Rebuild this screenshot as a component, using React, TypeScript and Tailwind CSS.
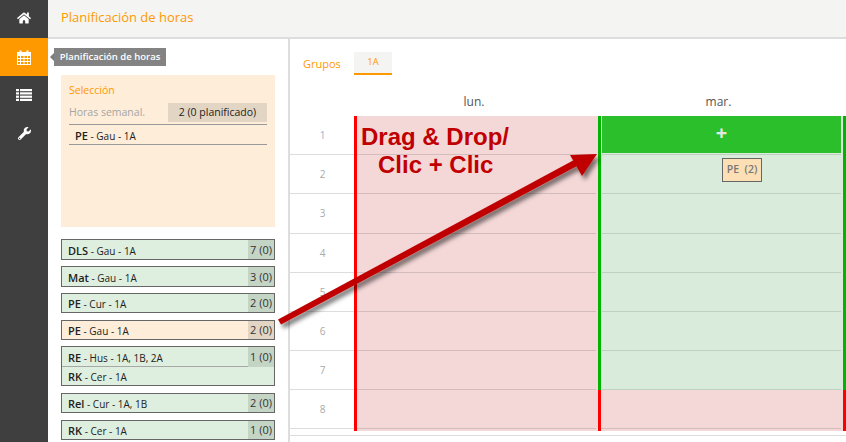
import React from "react";
import { FaHome, FaWrench } from "react-icons/fa";

function CalendarIcon() {
  return (
    <svg width="14" height="15" viewBox="0 0 14 15" fill="none" stroke="white" strokeWidth="1">
      <rect x="0.5" y="2.5" width="13" height="12" />
      <rect x="0.5" y="2.5" width="13" height="3" fill="white" />
      <path d="M0.5 8.5H13.5M0.5 11.5H13.5M3.5 5.5V14.5M7 5.5V14.5M10.5 5.5V14.5" />
      <path d="M3.5 0.5V3.5M10.5 0.5V3.5" strokeWidth="2" />
    </svg>
  );
}

function ListIcon() {
  return (
    <svg width="16" height="12" viewBox="0 0 16 12" fill="white">
      <rect x="0" y="0" width="16" height="2.2" />
      <rect x="0" y="3.3" width="16" height="2.2" />
      <rect x="0" y="6.6" width="16" height="2.2" />
      <rect x="0" y="9.8" width="16" height="2.2" />
      <rect x="3" y="0" width="1" height="12" fill="#3f3f3f" />
    </svg>
  );
}

function Sidebar() {
  return (
    <div className="w-[48px] shrink-0 bg-[#3f3f3f] flex flex-col">
      <div className="h-[38px] flex items-center justify-center pb-[3px]"><FaHome className="text-white text-[14px]" /></div>
      <div className="h-[38px] flex items-center justify-center bg-[#ff9900]"><CalendarIcon /></div>
      <div className="h-[38px] flex items-center justify-center"><ListIcon /></div>
      <div className="h-[38px] flex items-center justify-center"><FaWrench className="text-white text-[13px]" /></div>
    </div>
  );
}

type Item = { a: string; b: string; n: string; h: string; mt: string; sel?: boolean; extra?: [string, string] };
const items: Item[] = [
  { a: "DLS", b: "Gau - 1A", n: "7 (0)", h: "h-[19px]", mt: "mt-0" },
  { a: "Mat", b: "Gau - 1A", n: "3 (0)", h: "h-[19px]", mt: "mt-[6px]" },
  { a: "PE", b: "Cur - 1A", n: "2 (0)", h: "h-[18px]", mt: "mt-[6px]" },
  { a: "PE", b: "Gau - 1A", n: "2 (0)", h: "h-[18px]", mt: "mt-[7px]", sel: true },
  { a: "RE", b: "Hus - 1A, 1B, 2A", n: "1 (0)", h: "h-[20px]", mt: "mt-[6px]", extra: ["RK", "Cer - 1A"] },
  { a: "Rel", b: "Cur - 1A, 1B", n: "2 (0)", h: "h-[18px]", mt: "mt-[7px]" },
  { a: "RK", b: "Cer - 1A", n: "1 (0)", h: "h-[18px]", mt: "mt-[7px]" },
];

function Name({ a, b }: { a: string; b: string }) {
  return (
    <span className="text-[#222] whitespace-nowrap leading-[14px]">
      <span className="text-[11px] font-semibold">{a}</span>
      <span className="text-[10px]"> - {b}</span>
    </span>
  );
}

function ListItem({ it }: { it: Item }) {
  return (
    <div className={`${it.mt} border border-[#666] ${it.sel ? "bg-[#feedd9]" : "bg-[#deeedf]"}`}>
      <div className={`flex ${it.h}`}>
        <div className={`flex-1 flex items-center pl-[6px] ${it.extra ? "border-b border-[#a8a8a8]" : ""}`}>
          <Name a={it.a} b={it.b} />
        </div>
        <div className={`w-[26px] flex items-center justify-center text-[11px] leading-[14px] text-[#333] ${it.sel ? "bg-[#e3d5c3]" : "bg-[#c5d5c5]"}`}>{it.n}</div>
      </div>
      {it.extra && (
        <div className="h-[18px] flex items-center pl-[6px]">
          <Name a={it.extra[0]} b={it.extra[1]} />
        </div>
      )}
    </div>
  );
}

function LeftPanel() {
  return (
    <div className="w-[242px] shrink-0 border-r-2 border-[#dddddd] pl-[13px] pr-[13px]">
      <div className="h-[36px] pt-[13px] text-[11px] leading-[16px] text-[#bbb]">Clases</div>
      <div className="h-[152px] bg-[#feedd9] px-[8px] pt-[8px]">
        <div className="text-[10.5px] leading-[15px] text-[#ff9900]">Selección</div>
        <div className="flex items-center justify-between mt-[5px] h-[19px]">
          <span className="text-[10.5px] text-[#a5a5a5]">Horas semanal.</span>
          <span className="w-[99px] h-[19px] flex items-center justify-center bg-[#e3d5c3] text-[10.5px] text-[#222]">2 (0 planificado)</span>
        </div>
        <div className="mt-[2px] h-[21px] border-y border-[#999] flex items-center pl-[6px]">
          <Name a="PE" b="Gau - 1A" />
        </div>
      </div>
      <div className="mt-[12px]">
        {items.map((it, i) => <ListItem key={i} it={it} />)}
      </div>
    </div>
  );
}

const hours = [
  { n: "1", h: "h-[39px]" },
  { n: "2", h: "h-[39px]" },
  { n: "3", h: "h-[40px]" },
  { n: "4", h: "h-[39px]" },
  { n: "5", h: "h-[39px]" },
  { n: "6", h: "h-[39px]" },
  { n: "7", h: "h-[39px]" },
  { n: "8", h: "h-[39px]" },
];

function Red() {
  return (
    <div className="h-full border-l-[3px] border-[#ff0000] bg-[#f4d7d7] flex flex-col">
      <div className="flex-1" />
      <div className="h-px mr-[2px] bg-[#d5bcbc]" />
    </div>
  );
}

function Green({ top, chip }: { top?: boolean; chip?: boolean }) {
  return (
    <div className="h-full border-l-[3px] border-[#00b400] bg-[#d9ebda] flex flex-col">
      {top ? (
        <div className="flex-1 ml-px mr-[2px] mb-px bg-[#2bbf2b] flex items-center justify-center font-bold text-[20px] leading-none pb-[3px] text-[#e4e8e4]">+</div>
      ) : (
        <div className="flex-1 flex justify-center pt-[3px]">
          {chip && (
            <div className="ml-[40px] w-[40px] h-[24px] border border-[#666] bg-[#fcdfb5] text-[#777] text-[10.5px] font-semibold flex items-center justify-center whitespace-pre">PE  (2)</div>
          )}
        </div>
      )}
      <div className="h-px ml-px mr-[2px] bg-[#bfd0c0]" />
    </div>
  );
}

function Grid() {
  return (
    <div className="flex-1 min-w-0 overflow-hidden">
      <div className="flex h-[36px] items-start pt-[13px] pl-[13px]">
        <span className="text-[11px] leading-[23px] text-[#ff9900] w-[51px]">Grupos</span>
        <span className="w-[38px] h-[23px] bg-[#f4f4f2] border-b-2 border-[#ff9900] text-[9.5px] text-[#ff9900] flex items-center justify-center">1A</span>
      </div>
      <div className="flex h-[41px] w-[600px] items-center text-[12px] text-[#555] pt-[13px]">
        <div className="w-[64px]" />
        <div className="w-[244px] text-center pr-[4px]">lun.</div>
        <div className="w-[245px] text-center pr-[4px]">mar.</div>
      </div>
      {hours.map((r, i) => (
        <div key={r.n} className={`flex ${r.h} w-[600px]`}>
          <div className={`w-[64px] shrink-0 border-b border-[#dddddd] flex items-center justify-center pl-[1px] text-[10px] ${i === 0 ? "text-[#8fb0d8]" : "text-[#aaaaaa]"}`}>{r.n}</div>
          <div className="w-[244px] shrink-0"><Red /></div>
          <div className="w-[245px] shrink-0">
            {i === 7 ? <Red /> : <Green top={i === 0} chip={i === 1} />}
          </div>
          <div className="w-[47px] shrink-0">
            {i === 7 ? <Red /> : <Green />}
          </div>
        </div>
      ))}
      <div className="flex h-[2px] w-[600px]">
        <div className="w-[64px]" />
        <div className="w-[244px] border-l-[3px] border-[#ff0000] bg-[#f4d7d7]" />
        <div className="w-[245px] border-l-[3px] border-[#ff0000] bg-[#f4d7d7]" />
        <div className="w-[47px] border-l-[3px] border-[#ff0000] bg-[#f4d7d7]" />
      </div>
      <div className="mt-[4px] h-[1px] bg-[#dddddd]" />
    </div>
  );
}

export default function App() {
  return (
    <div className="relative flex w-[846px] h-[442px] overflow-hidden bg-white font-['Open_Sans',sans-serif]">
      <Sidebar />
      <div className="flex-1 min-w-0 flex flex-col">
        <div className="h-[39px] shrink-0 bg-[#f4f4f2] border-b-2 border-[#dddddd] flex items-center pl-[13px] pb-[2px] text-[13px] text-[#ff9900]">
          Planificación de horas
        </div>
        <div className="flex-1 flex min-h-0">
          <LeftPanel />
          <Grid />
        </div>
      </div>

      {/* tooltip */}
      <div className="absolute left-[54px] top-[48px] w-[112px] h-[18px] bg-[#7c7c7c]/95 flex items-center justify-center text-[9.5px] font-semibold text-white whitespace-nowrap">
        Planificación de horas
        <div className="absolute left-[-4px] top-[5px] w-0 h-0 border-y-[4px] border-y-transparent border-r-[4px] border-r-[#7c7c7c]" />
      </div>

      {/* annotation */}
      <svg className="absolute left-0 top-0 pointer-events-none" width="846" height="442" viewBox="0 0 846 442">
        <defs>
          <filter id="s" x="-10%" y="-10%" width="120%" height="130%">
            <feDropShadow dx="3" dy="4" stdDeviation="2" floodColor="#000" floodOpacity="0.5" />
          </filter>
        </defs>
        <g filter="url(#s)" fill="#c00000">
          <polygon points="278,319.5 574,160 577,166 281,324.5" />
          <polygon points="570,155 597,154 582,176" />
        </g>
      </svg>
      <div className="absolute left-[361px] top-[123px] font-['Liberation_Sans',sans-serif] font-bold text-[24px] leading-[28px] text-[#c00000] whitespace-pre">
        <div>Drag &amp; Drop/</div>
        <div className="pl-[17px]">Clic + Clic</div>
      </div>
    </div>
  );
}
